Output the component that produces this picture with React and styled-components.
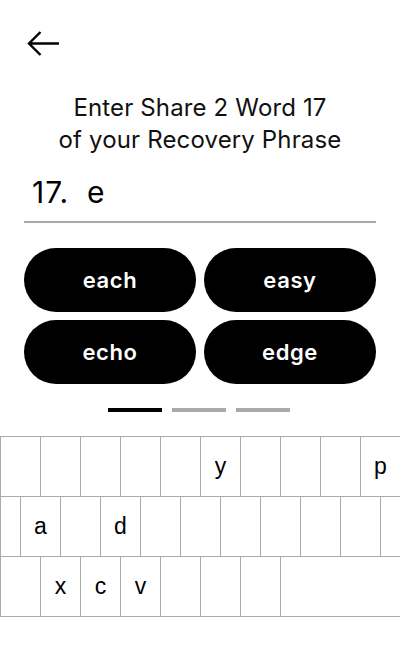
import styled, { createGlobalStyle } from "styled-components";

const GlobalStyle = createGlobalStyle`
  html, body {
    margin: 0;
    padding: 0;
    background: #fff;
  }
  body {
    font-family: Inter, "Noto Sans", sans-serif;
    color: #000;
  }
`;

const suggestions = ["each", "easy", "echo", "edge"];

const keyRows = [
  ["q", "w", "e", "r", "t", "y", "u", "i", "o", "p"].map((k) => ({
    label: k,
    active: k === "y" || k === "p",
  })),
  [
    { label: "", size: "half" },
    ...["a", "s", "d", "f", "g", "h", "j", "k", "l"].map((k) => ({
      label: k,
      active: k === "a" || k === "d",
    })),
    { label: "" },
  ],
  [
    ...["z", "x", "c", "v", "b", "n", "m"].map((k) => ({
      label: k,
      active: k === "x" || k === "c" || k === "v",
    })),
    { label: "", size: "wide" },
  ],
];

function BackArrow() {
  return (
    <svg width="34" height="26" viewBox="0 0 34 26" fill="none">
      <path
        d="M33 12.5H3 M14.5 1 L3 12.5 L14.5 24"
        stroke="#000"
        strokeWidth="2.4"
        strokeLinejoin="miter"
      />
    </svg>
  );
}

export default function App() {
  return (
    <>
      <GlobalStyle />
      <Screen>
        <Header>
          <BackButton aria-label="Back">
            <BackArrow />
          </BackButton>
        </Header>

        <Title>
          Enter Share 2 Word 17
          <br />
          of your Recovery Phrase
        </Title>

        <InputRow>
          <WordIndex>17.</WordIndex>
          <Typed>e</Typed>
        </InputRow>

        <SuggestionGrid>
          {suggestions.map((w) => (
            <Suggestion key={w}>{w}</Suggestion>
          ))}
        </SuggestionGrid>

        <Pager>
          <PagerBar $active />
          <PagerBar />
          <PagerBar />
        </Pager>

        <Keyboard>
          {keyRows.map((row, i) => (
            <KeyRow key={i}>
              {row.map((k, j) => (
                <Key key={j} $size={k.size}>
                  {k.active ? k.label : ""}
                </Key>
              ))}
            </KeyRow>
          ))}
        </Keyboard>
      </Screen>
    </>
  );
}

/* ============ Styles ============ */
const Screen = styled.div`
  width: 400px;
  height: 672px;
  display: flex;
  flex-direction: column;
  overflow: hidden;
  background: #fff;
`;

const Header = styled.div`
  display: flex;
  padding: 31px 0 0 26px;
`;

const BackButton = styled.button`
  border: 0;
  padding: 0;
  background: none;
  display: block;
  line-height: 0;
  cursor: pointer;
`;

const Title = styled.h1`
  margin: 35px 0 0;
  font-size: 24px;
  line-height: 32px;
  font-weight: 400;
  letter-spacing: 0.15px;
  text-align: center;
  color: #111;
`;

const InputRow = styled.div`
  margin: 18px 24px 0;
  padding: 0 8px 11px;
  display: flex;
  align-items: baseline;
  gap: 18px;
  font-size: 30px;
  line-height: 36px;
  letter-spacing: 1px;
  border-bottom: 2px solid #aaa;
`;

const WordIndex = styled.span`
  font-weight: 400;
`;

const Typed = styled.span`
  font-weight: 400;
`;

const SuggestionGrid = styled.div`
  margin-top: 25px;
  padding: 0 24px;
  display: grid;
  grid-template-columns: 1fr 1fr;
  grid-auto-rows: 64px;
  gap: 8px;
`;

const Suggestion = styled.button`
  border: 0;
  border-radius: 32px;
  background: #000;
  color: #fff;
  font-family: Inter, "Noto Sans", sans-serif;
  font-size: 22px;
  font-weight: 600;
  letter-spacing: 0.6px;
  display: flex;
  align-items: center;
  justify-content: center;
  cursor: pointer;
`;

const Pager = styled.div`
  margin-top: 24px;
  padding-right: 2px;
  display: flex;
  justify-content: center;
  gap: 10px;
`;

const PagerBar = styled.div`
  width: 54px;
  height: 4px;
  background: ${(p) => (p.$active ? "#000" : "#aaa")};
`;

const Keyboard = styled.div`
  margin-top: 24px;
  border-top: 1px solid #aaa;
  border-left: 1px solid #aaa;
  overflow: hidden;
`;

const KeyRow = styled.div`
  display: flex;
  height: 60px;
`;

const Key = styled.div`
  box-sizing: border-box;
  flex: 0 0
    ${(p) => (p.$size === "half" ? "20px" : p.$size === "wide" ? "160px" : "40px")};
  height: 60px;
  border-right: 1px solid #aaa;
  border-bottom: 1px solid #aaa;
  display: flex;
  align-items: center;
  justify-content: center;
  font-family: "Liberation Sans", Arial, sans-serif;
  font-size: 23px;
  color: #000;
`;
